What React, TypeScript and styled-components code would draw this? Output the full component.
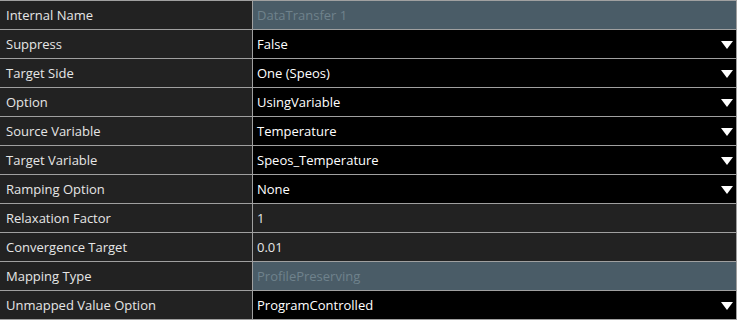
import React from 'react';
import styled, { createGlobalStyle } from 'styled-components';

type Kind = 'list' | 'text' | 'readonly';

interface Prop {
    label: string;
    value: string;
    kind: Kind;
}

const rows: Prop[] = [
    { label: 'Internal Name', value: 'DataTransfer 1', kind: 'readonly' },
    { label: 'Suppress', value: 'False', kind: 'list' },
    { label: 'Target Side', value: 'One (Speos)', kind: 'list' },
    { label: 'Option', value: 'UsingVariable', kind: 'list' },
    { label: 'Source Variable', value: 'Temperature', kind: 'list' },
    { label: 'Target Variable', value: 'Speos_Temperature', kind: 'list' },
    { label: 'Ramping Option', value: 'None', kind: 'list' },
    { label: 'Relaxation Factor', value: '1', kind: 'text' },
    { label: 'Convergence Target', value: '0.01', kind: 'text' },
    { label: 'Mapping Type', value: 'ProfilePreserving', kind: 'readonly' },
    { label: 'Unmapped Value Option', value: 'ProgramControlled', kind: 'list' },
];

const App = () => {
    return (
        <>
            <GlobalStyle />
            <Grid>
                {rows.map((row) => (
                    <Row key={row.label}>
                        <Label>{row.label}</Label>
                        <Value $kind={row.kind}>
                            <span>{row.value}</span>
                            {row.kind === 'list' && (
                                <Arrow viewBox="0 0 12 8">
                                    <polygon points="0,0 12,0 6,8" fill="#ffffff" />
                                </Arrow>
                            )}
                        </Value>
                    </Row>
                ))}
            </Grid>
        </>
    );
};

export default App;

const GlobalStyle = createGlobalStyle`
    html, body {
        margin: 0;
        padding: 0;
        background: #222222;
    }
    body {
        font-family: "Open Sans", "Noto Sans", sans-serif;
        font-size: 13px;
    }
`;

const Grid = styled.div`
    width: 737px;
    display: flex;
    flex-direction: column;
    border-top: 1px solid #a0a0a0;
    background: #a0a0a0;
    gap: 1px;
    padding-bottom: 1px;
`;

const Row = styled.div`
    display: grid;
    grid-template-columns: 252px 1fr;
    column-gap: 1px;
    height: 28px;
    padding-right: 1px;
`;

const Label = styled.div`
    display: flex;
    align-items: center;
    padding-left: 6px;
    background: #222222;
    color: #e6e6e6;
`;

const valueBg: Record<Kind, string> = {
    list: '#000000',
    text: '#222222',
    readonly: '#4a5c67',
};

const valueColor: Record<Kind, string> = {
    list: '#ffffff',
    text: '#e6e6e6',
    readonly: '#6f828c',
};

const Value = styled.div<{ $kind: Kind }>`
    display: flex;
    align-items: center;
    justify-content: space-between;
    padding-left: 4px;
    padding-right: 3px;
    background: ${(p) => valueBg[p.$kind]};
    color: ${(p) => valueColor[p.$kind]};
`;

const Arrow = styled.svg`
    width: 12px;
    height: 8px;
    margin-top: 1px;
`;
